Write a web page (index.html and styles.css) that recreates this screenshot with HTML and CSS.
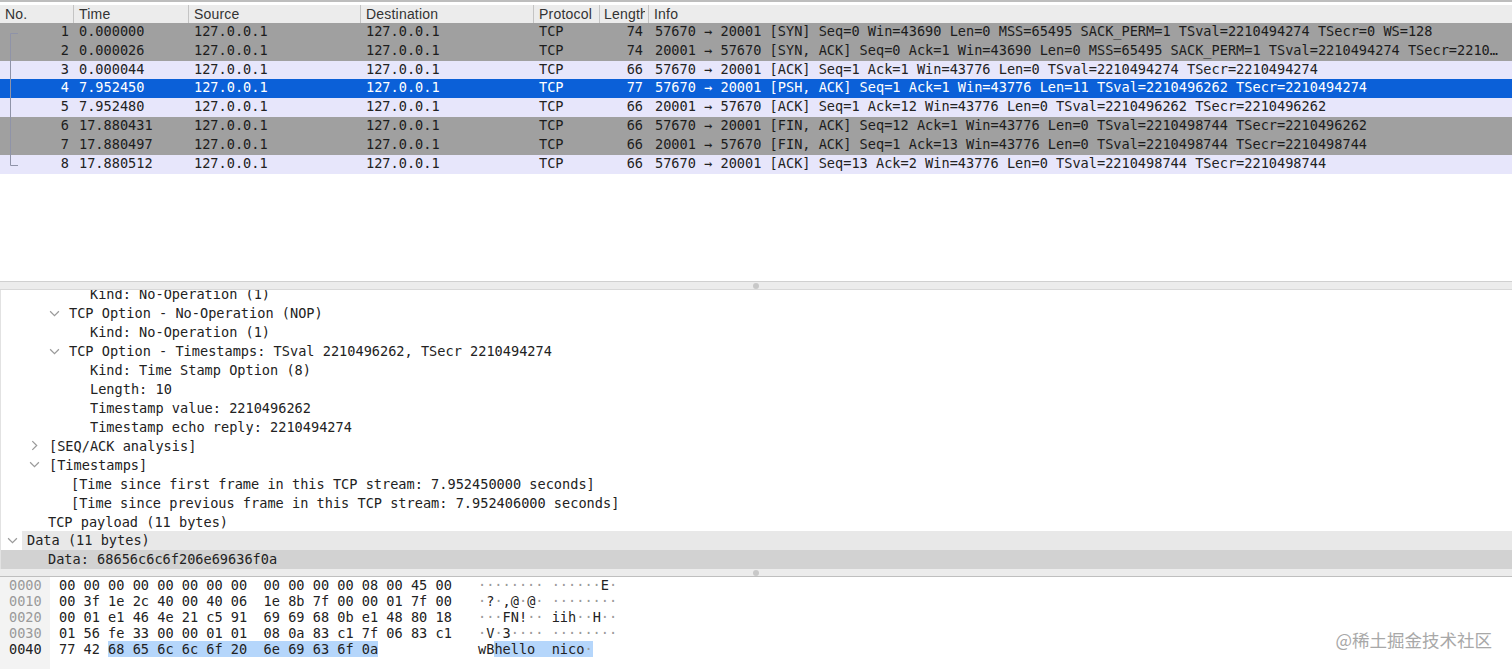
FILE: index.html
```html
<!DOCTYPE html>
<html lang="en">
<head>
  <meta charset="UTF-8">
  <title>Wireshark</title>
  <link rel="stylesheet" href="styles.css">
</head>
<body>
  <!-- packet list -->
  <section class="packets">
    <div class="head">
      <div class="th">No.</div>
      <div class="th">Time</div>
      <div class="th">Source</div>
      <div class="th">Destination</div>
      <div class="th">Protocol</div>
      <div class="th th-len">Length</div>
      <div class="th">Info</div>
    </div>

    <div class="row syn">
      <div class="no">1</div><div>0.000000</div><div>127.0.0.1</div><div>127.0.0.1</div><div>TCP</div><div class="len">74</div>
      <div class="info">57670 → 20001 [SYN] Seq=0 Win=43690 Len=0 MSS=65495 SACK_PERM=1 TSval=2210494274 TSecr=0 WS=128</div>
    </div>
    <div class="row syn">
      <div class="no">2</div><div>0.000026</div><div>127.0.0.1</div><div>127.0.0.1</div><div>TCP</div><div class="len">74</div>
      <div class="info">20001 → 57670 [SYN, ACK] Seq=0 Ack=1 Win=43690 Len=0 MSS=65495 SACK_PERM=1 TSval=2210494274 TSecr=2210…</div>
    </div>
    <div class="row tcp">
      <div class="no">3</div><div>0.000044</div><div>127.0.0.1</div><div>127.0.0.1</div><div>TCP</div><div class="len">66</div>
      <div class="info">57670 → 20001 [ACK] Seq=1 Ack=1 Win=43776 Len=0 TSval=2210494274 TSecr=2210494274</div>
    </div>
    <div class="row selected">
      <div class="no">4</div><div>7.952450</div><div>127.0.0.1</div><div>127.0.0.1</div><div>TCP</div><div class="len">77</div>
      <div class="info">57670 → 20001 [PSH, ACK] Seq=1 Ack=1 Win=43776 Len=11 TSval=2210496262 TSecr=2210494274</div>
    </div>
    <div class="row tcp">
      <div class="no">5</div><div>7.952480</div><div>127.0.0.1</div><div>127.0.0.1</div><div>TCP</div><div class="len">66</div>
      <div class="info">20001 → 57670 [ACK] Seq=1 Ack=12 Win=43776 Len=0 TSval=2210496262 TSecr=2210496262</div>
    </div>
    <div class="row syn">
      <div class="no">6</div><div>17.880431</div><div>127.0.0.1</div><div>127.0.0.1</div><div>TCP</div><div class="len">66</div>
      <div class="info">57670 → 20001 [FIN, ACK] Seq=12 Ack=1 Win=43776 Len=0 TSval=2210498744 TSecr=2210496262</div>
    </div>
    <div class="row syn">
      <div class="no">7</div><div>17.880497</div><div>127.0.0.1</div><div>127.0.0.1</div><div>TCP</div><div class="len">66</div>
      <div class="info">20001 → 57670 [FIN, ACK] Seq=1 Ack=13 Win=43776 Len=0 TSval=2210498744 TSecr=2210498744</div>
    </div>
    <div class="row tcp">
      <div class="no">8</div><div>17.880512</div><div>127.0.0.1</div><div>127.0.0.1</div><div>TCP</div><div class="len">66</div>
      <div class="info">57670 → 20001 [ACK] Seq=13 Ack=2 Win=43776 Len=0 TSval=2210498744 TSecr=2210498744</div>
    </div>

    <!-- conversation bracket -->
    <svg class="bracket" width="12" height="134" viewBox="0 0 12 134">
      <path d="M12 .5H4.500V132.500H12" fill="none" stroke="#8f93a8" stroke-width="1"/>
    </svg>
  </section>

  <div class="splitter"><span class="grip"></span></div>

  <!-- packet details -->
  <section class="details">
    <div class="tree">
      <div class="line d4">Kind: No-Operation (1)</div>
      <div class="line d3"><svg class="tw" viewBox="0 0 10 10"><path d="M1 3l4 4 4-4"/></svg>TCP Option - No-Operation (NOP)</div>
      <div class="line d4">Kind: No-Operation (1)</div>
      <div class="line d3"><svg class="tw" viewBox="0 0 10 10"><path d="M1 3l4 4 4-4"/></svg>TCP Option - Timestamps: TSval 2210496262, TSecr 2210494274</div>
      <div class="line d4">Kind: Time Stamp Option (8)</div>
      <div class="line d4">Length: 10</div>
      <div class="line d4">Timestamp value: 2210496262</div>
      <div class="line d4">Timestamp echo reply: 2210494274</div>
      <div class="line d2"><svg class="tw" viewBox="0 0 10 10"><path d="M3 1l4 4-4 4"/></svg>[SEQ/ACK analysis]</div>
      <div class="line d2"><svg class="tw" viewBox="0 0 10 10"><path d="M1 3l4 4 4-4"/></svg>[Timestamps]</div>
      <div class="line d5">[Time since first frame in this TCP stream: 7.952450000 seconds]</div>
      <div class="line d5">[Time since previous frame in this TCP stream: 7.952406000 seconds]</div>
      <div class="line d6">TCP payload (11 bytes)</div>
      <div class="line d1"><svg class="tw tw-data" viewBox="0 0 10 10"><path d="M1 3l4 4 4-4"/></svg><span class="parent">Data (11 bytes)</span></div>
      <div class="line d6 current">Data: 68656c6c6f206e69636f0a</div>
    </div>
  </section>

  <div class="splitter thin"><span class="grip"></span></div>

  <!-- hex dump -->
  <section class="hex">
    <div class="offsets">
      <div>0000</div>
      <div>0010</div>
      <div>0020</div>
      <div>0030</div>
      <div class="on">0040</div>
    </div>
    <div class="bytes">
      <div>00 00 00 00 00 00 00 00  00 00 00 00 08 00 45 00</div>
      <div>00 3f 1e 2c 40 00 40 06  1e 8b 7f 00 00 01 7f 00</div>
      <div>00 01 e1 46 4e 21 c5 91  69 69 68 0b e1 48 80 18</div>
      <div>01 56 fe 33 00 00 01 01  08 0a 83 c1 7f 06 83 c1</div>
      <div>77 42 <mark>68 65 6c 6c 6f 20  6e 69 63 6f 0a</mark></div>
    </div>
    <div class="ascii">
      <div><i>········</i> <i>······</i>E<i>·</i></div>
      <div><i>·</i>?<i>·</i>,@<i>·</i>@<i>·</i> <i>········</i></div>
      <div><i>···</i>FN!<i>··</i> iih<i>··</i>H<i>··</i></div>
      <div><i>·</i>V<i>·</i>3<i>····</i> <i>········</i></div>
      <div>wB<mark>hello  nico<i>·</i></mark></div>
    </div>
    <div class="mark">@稀土掘金技术社区</div>
  </section>
</body>
</html>
```

FILE: styles.css
```css
* {
  box-sizing: border-box;
  margin: 0;
  padding: 0;
}

body {
  display: flex;
  flex-direction: column;
  width: 1512px;
  height: 669px;
  overflow: hidden;
  background-color: #fff;
  color: #222;
  font-family: "DejaVu Sans Mono", "Liberation Mono", monospace;
  font-size: 13.6px;
}

.packets {
  position: relative;
  flex: none;
  height: 281px;
  padding-top: 5px;
  border-top: 2px solid #bdbdbd;
}

.head,
.row {
  display: grid;
  grid-template-columns: 73px 115px 172px 173px 66px 49px 1fr;
}

.head {
  height: 18px;
  margin-top: -2px;
  background-color: #ececec;
  color: #333;
  font-family: "Liberation Sans", Arial, sans-serif;
  font-size: 14px;
  letter-spacing: .2px;
  line-height: 18px;
}

.th {
  padding-left: 5px;
  overflow: hidden;
  white-space: nowrap;
  border-left: 1px solid #c4c4c4;
}

.th:first-child {
  border-left: none;
}

/* column text stops short of the next separator */
.th-len {
  padding-left: 4px;
  border-right: 3px solid #ececec;
}

.row {
  height: 18.83px;
  line-height: 17px;
  white-space: pre;
}

.row > div {
  padding-left: 6px;
}

.row > .no {
  padding: 0 4px 0 0;
  text-align: right;
}

.row > .len {
  padding: 0 5px 0 0;
  text-align: right;
}

.row > .info {
  padding-left: 7px;
}

.syn {
  background-color: #a0a0a0;
  color: #1c1c1c;
}

.tcp {
  background-color: #e7e6fb;
}

.selected {
  background-color: #0b60d8;
  color: #fff;
}

.bracket {
  position: absolute;
  left: 6px;
  top: 31px;
}

.splitter {
  display: flex;
  flex: none;
  justify-content: center;
  align-items: center;
  height: 9px;
  background-color: #ececec;
  border-top: 1px solid #d0d0d0;
  border-bottom: 1px solid #d8d8d8;
}

.splitter.thin {
  height: 8px;
  border-top: none;
  border-bottom: 1px solid #bfbfbf;
}

.grip {
  width: 6px;
  height: 6px;
  border-radius: 50%;
  background-color: #c8c8c8;
}

.details {
  flex: none;
  height: 279px;
  overflow: hidden;
  border-left: 1px solid #e2e2e2;
}

.tree {
  margin-top: -5px;
}

.line {
  display: flex;
  align-items: center;
  height: 18.93px;
  white-space: pre;
}

.d1 { padding-left: 0; }
.d2 { padding-left: 28px; }
.d3 { padding-left: 48px; }
.d4 { padding-left: 89px; }
.d5 { padding-left: 70px; }
.d6 { padding-left: 47px; }

.tw {
  flex: none;
  width: 11px;
  height: 11px;
  margin-right: 9px;
  fill: none;
  stroke: #9a9a9a;
  stroke-width: 1.1;
}

.tw-data {
  margin-left: 6px;
  margin-right: 4px;
}

.parent {
  flex: 1;
  align-self: stretch;
  padding-left: 5px;
  line-height: 18.93px;
  background-color: #e8e8e8;
}

.current {
  background-color: #d2d2d2;
}

.hex {
  display: flex;
  position: relative;
  flex: 1;
  line-height: 15.95px;
}

.offsets div,
.bytes div,
.ascii div {
  white-space: pre;
}

.offsets {
  width: 50px;
  padding: 1px 0 0 9px;
  background-color: #f3f3f3;
  color: #9a9a9a;
}

.offsets .on {
  color: #222;
}

.bytes {
  width: 419px;
  padding: 1px 0 0 9px;
}

.ascii {
  padding: 1px 0 0 9px;
}

.ascii i {
  color: #9a9a9a;
  font-style: normal;
}

mark {
  background-color: #b5d6fb;
  color: inherit;
}

.mark {
  position: absolute;
  right: 20px;
  bottom: 18px;
  color: #a8a8a8;
  font-family: "Noto Sans CJK SC", sans-serif;
  font-size: 17.500px;
  line-height: 22px;
}
```
